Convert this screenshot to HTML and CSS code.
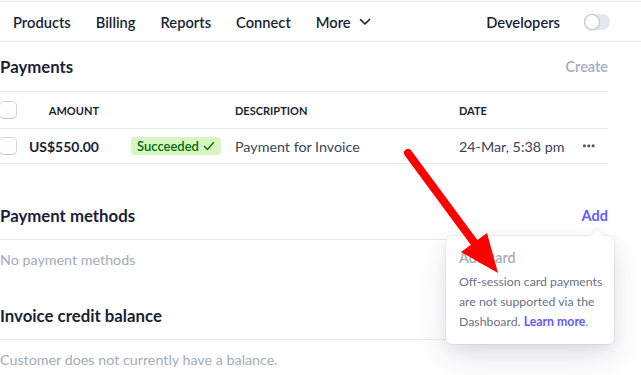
FILE: index.html
```html
<!DOCTYPE html>
<html lang="en">
<head>
<meta charset="utf-8">
<title>Customer</title>
<link rel="stylesheet" href="styles.css">
</head>
<body>
<nav class="nav">
  <div class="nav-links">
    <span class="nav-link">Products</span>
    <span class="nav-link">Billing</span>
    <span class="nav-link">Reports</span>
    <span class="nav-link">Connect</span>
    <span class="nav-link more">More
      <svg class="chev" width="12" height="8" viewBox="0 0 12 8"><path d="M1.5 1.5 L6 6 L10.5 1.5" fill="none" stroke="#1a1f36" stroke-width="1.6" stroke-linecap="round" stroke-linejoin="round"/></svg>
    </span>
  </div>
  <div class="dev">
    <span class="nav-link">Developers</span>
    <span class="toggle"><span class="knob"></span></span>
  </div>
</nav>

<main class="content">
  <section class="section">
    <div class="section-head">
      <h2 class="title">Payments</h2>
      <span class="action muted">Create</span>
    </div>
    <div class="row thead">
      <span class="cell"><span class="checkbox"></span></span>
      <span class="cell amount">Amount</span>
      <span class="cell status"></span>
      <span class="cell">Description</span>
      <span class="cell">Date</span>
      <span class="cell"></span>
    </div>
    <div class="row tbody">
      <span class="cell"><span class="checkbox"></span></span>
      <span class="cell amount strong">US$550.00</span>
      <span class="cell status"><span class="badge">Succeeded <svg class="check" width="12" height="12" viewBox="0 0 12 12"><path d="M1.5 6.5 L4.5 9.5 L10.5 2.5" fill="none" stroke="#217005" stroke-width="1.5" stroke-linecap="round" stroke-linejoin="round"/></svg></span></span>
      <span class="cell">Payment for Invoice</span>
      <span class="cell">24-Mar, 5:38 pm</span>
      <span class="cell actions"><svg width="13" height="4" viewBox="0 0 13 4"><rect x="0" y="0.5" width="2.8" height="2.8" rx="0.8" fill="#4f566b"/><rect x="4.4" y="0.5" width="2.8" height="2.8" rx="0.8" fill="#4f566b"/><rect x="8.8" y="0.5" width="2.8" height="2.8" rx="0.8" fill="#4f566b"/></svg></span>
    </div>
  </section>

  <section class="section spaced">
    <div class="section-head small">
      <h2 class="title">Payment methods</h2>
      <span class="action link">Add</span>
    </div>
    <p class="empty">No payment methods</p>
  </section>

  <section class="section">
    <div class="section-head small">
      <h2 class="title">Invoice credit balance</h2>
    </div>
    <p class="empty">Customer does not currently have a balance.</p>
  </section>
</main>

<div class="popover">
  <div class="pop-title">Add card</div>
  <div class="pop-body">
    <span class="pop-line">Off-session card payments</span>
    <span class="pop-line">are not supported via the</span>
    <span class="pop-line">Dashboard. <span class="pop-link">Learn more</span>.</span>
  </div>
</div>

<svg class="arrow" width="641" height="375" viewBox="0 0 641 375">
  <line x1="408" y1="153" x2="476" y2="245" stroke="#ff0000" stroke-width="8" stroke-linecap="round"/>
  <polygon points="461,252 487,233 498,273" fill="#ff0000"/>
</svg>
</body>
</html>
```

FILE: styles.css
```css
* { box-sizing: border-box; }

body {
  margin: 0;
  background: #ffffff;
  font-family: Lato, "Liberation Sans", sans-serif;
  color: #1a1f36;
  font-size: 14px;
}

.nav {
  margin-top: 1px;
  height: 41px;
  border-top: 1px solid #e3e8ee;
  border-bottom: 1px solid #e3e8ee;
  display: flex;
  align-items: center;
  justify-content: space-between;
  padding: 0 31px 0 13px;
}

.nav-links {
  display: flex;
  align-items: center;
  gap: 25px;
}

.nav-link {
  font-size: 14.7px;
  font-weight: 600;
  color: #1a1f36;
  line-height: 20px;
}

.more {
  display: flex;
  align-items: center;
  gap: 8px;
}

.chev { display: block; margin-top: 1px; }

.dev {
  display: flex;
  align-items: center;
  gap: 24px;
}

.toggle {
  width: 26px;
  height: 16px;
  border-radius: 8px;
  background: #e3e8ee;
  display: flex;
  align-items: center;
}

.knob {
  width: 16px;
  height: 16px;
  border-radius: 50%;
  background: #fff;
  box-shadow: 0 0 0 1px #b8c0cb inset, 0 1px 1px rgba(0,0,0,0.08);
}

.content {
  width: 608px;
}

.section-head {
  height: 50px;
  border-bottom: 1px solid #e3e8ee;
  display: flex;
  align-items: center;
  justify-content: space-between;
}

.section-head.small { height: 48px; }

.title {
  margin: 0;
  font-size: 16.8px;
  font-weight: 700;
  line-height: 24px;
  color: #1a1f36;
}

.action {
  font-size: 14.5px;
  font-weight: 600;
  line-height: 20px;
}

.muted { color: #a3acb9; }
.link { color: #635bff; font-weight: 700; }

.spaced { margin-top: 28px; }

.row {
  display: grid;
  grid-template-columns: 16px 83px 136px 224px 1fr 33px;
  align-items: center;
  border-bottom: 1px solid #e3e8ee;
}

.thead {
  height: 37px;
  font-size: 11px;
  font-weight: 700;
  text-transform: uppercase;
  color: #1a1f36;
}

.tbody {
  height: 35px;
  font-size: 14.3px;
  color: #3c4257;
}

.cell { display: flex; align-items: center; }

.amount { justify-content: flex-end; }
.strong { font-weight: 700; color: #1a1f36; font-size: 14px; }

.status { padding-left: 32px; }

.actions { padding-left: 8px; }

.checkbox {
  width: 16px;
  height: 16px;
  border-radius: 4px;
  background: #fff;
  box-shadow: 0 0 0 1px rgba(60,66,87,0.22), 0 1px 1px rgba(0,0,0,0.08);
}

.badge {
  display: inline-flex;
  align-items: center;
  gap: 4px;
  height: 18px;
  padding: 0 6px;
  border-radius: 4px;
  background: #d7f7c2;
  color: #05690d;
  font-size: 13px;
  font-weight: 600;
}

.check { display: block; }

.empty {
  margin: 0;
  padding: 10px 0 22px;
  line-height: 20px;
  font-size: 14.3px;
  color: #a3acb9;
}

.popover {
  position: absolute;
  left: 446px;
  top: 236px;
  width: 168px;
  padding: 12px 12px 12px 13px;
  background: #fff;
  border-radius: 6px;
  box-shadow: 0 0 0 1px rgba(136,152,170,0.1), 0 15px 35px rgba(49,49,93,0.1), 0 5px 15px rgba(0,0,0,0.08);
}

.popover::before {
  content: "";
  position: absolute;
  top: -5px;
  left: 146px;
  width: 10px;
  height: 10px;
  background: #fff;
  transform: rotate(45deg);
  box-shadow: -1px -1px 1px rgba(136,152,170,0.15);
}

.pop-title {
  position: relative;
  font-size: 14.3px;
  font-weight: 600;
  line-height: 20px;
  color: #a3acb9;
  margin-bottom: 4px;
}

.pop-body {
  display: flex;
  flex-direction: column;
  font-size: 12.3px;
  line-height: 20px;
  color: #697386;
}

.pop-line { display: block; white-space: nowrap; }

.pop-link { color: #635bff; font-weight: 700; }

.arrow {
  position: absolute;
  left: 0;
  top: 0;
  pointer-events: none;
}
```
